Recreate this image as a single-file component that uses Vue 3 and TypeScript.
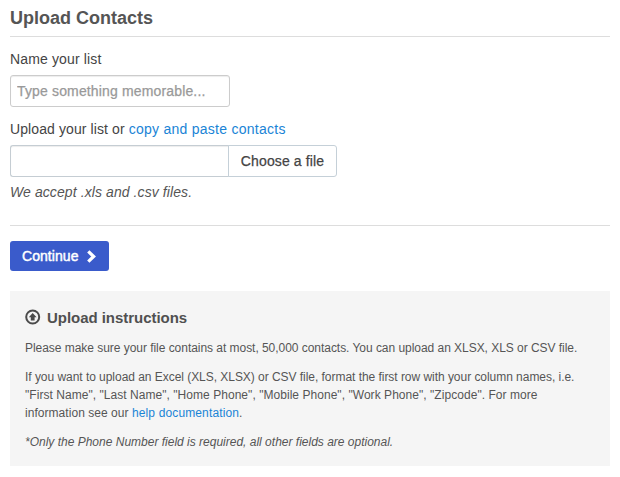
<script setup lang="ts">
import { ref } from 'vue'

const listName = ref<string>('')
const fileName = ref<string>('')
</script>

<template>
  <main class="page">
    <h1 class="title">Upload Contacts</h1>
    <form class="form" @submit.prevent>
      <label class="label name-label" for="list-name">Name your list</label>
      <input id="list-name" v-model="listName" class="field" type="text" placeholder="Type something memorable..." />
      <div class="label upload-label">Upload your list or <a class="link paste-link">copy and paste contacts</a></div>
      <div class="file-group">
        <input v-model="fileName" class="field file-field" type="text" readonly />
        <button class="choose" type="button">Choose a file</button>
      </div>
      <p class="hint">We accept .xls and .csv files.</p>
      <div class="actions">
        <button class="continue" type="submit">
          <span>Continue</span>
          <svg class="chevron" width="11" height="13" viewBox="0 0 11 13">
            <path d="M2.3 1.4 L7.6 6.5 L2.3 11.6" fill="none" stroke="#fff" stroke-width="3.3" />
          </svg>
        </button>
      </div>
    </form>
    <section class="panel">
      <h2 class="panel-title">
        <svg class="upload-icon" width="16" height="16" viewBox="0 0 16 16">
          <circle cx="7.7" cy="8" r="6.5" fill="none" stroke="#4b4b4b" stroke-width="2" />
          <path d="M7.7 3.9 L11.6 8.2 H9.6 V11.5 H5.8 V8.2 H3.8 Z" fill="#4b4b4b" />
        </svg>
        <span>Upload instructions</span>
      </h2>
      <p class="text snug">Please make sure your file contains at most, 50,000 contacts. You can upload an XLSX, XLS or CSV file.</p>
      <p class="text">
        <span class="snug">If you want to upload an Excel (XLS, XLSX) or CSV file, format the first row with your column names, i.e.</span><br />
        <span class="loose">"First Name", "Last Name", "Home Phone", "Mobile Phone", "Work Phone", "Zipcode". For more</span><br />
        <span class="loose">information see our <a class="link help-link">help documentation</a>.</span>
      </p>
      <p class="text note">*Only the Phone Number field is required, all other fields are optional.</p>
    </section>
  </main>
</template>

<style>
body {
  background: #fff;
}
</style>

<style scoped>
.page {
  box-sizing: border-box;
  height: 477px;
  padding: 0 10px;
  overflow: hidden;
  font-family: "Liberation Sans", Arial, sans-serif;
  font-size: 14px;
  line-height: 20px;
  color: #444;
}
.title {
  box-sizing: border-box;
  height: 37px;
  margin: 0;
  padding-top: 8px;
  border-bottom: 1px solid #ddd;
  font-size: 18px;
  line-height: 20px;
  color: #555;
  white-space: nowrap;
}
.form {
  display: flex;
  flex-direction: column;
  align-items: flex-start;
}
.label {
  white-space: nowrap;
}
.name-label {
  margin: 12px 0 6px;
  letter-spacing: 0.14px;
}
.upload-label {
  margin: 12px 0 6px;
  letter-spacing: 0.1px;
}
.link {
  color: #1a84d6;
  text-decoration: none;
}
.paste-link {
  letter-spacing: 0.26px;
}
.help-link {
  letter-spacing: 0.13px;
}
.field {
  box-sizing: border-box;
  width: 220px;
  height: 32px;
  padding: 0 6px;
  border: 1px solid #ccc;
  border-radius: 3px;
  background: #fff;
  box-shadow: inset 0 1px 1px rgba(0, 0, 0, 0.075);
  font: 14px "Liberation Sans", Arial, sans-serif;
  letter-spacing: 0.15px;
  color: #555;
  outline: none;
}
.field::placeholder {
  color: #999;
  opacity: 1;
  -webkit-text-stroke: 0.25px #999;
}
.file-group {
  display: flex;
}
.file-field {
  width: 219px;
  border-color: #c5cdd3;
  border-right: 0;
  border-radius: 3px 0 0 3px;
}
.choose {
  box-sizing: border-box;
  width: 109px;
  height: 32px;
  margin-left: -1px;
  padding: 0;
  border: 1px solid #c5d0d8;
  border-radius: 0 3px 3px 0;
  background: #fff;
  font: 14px "Liberation Sans", Arial, sans-serif;
  letter-spacing: 0.12px;
  color: #444;
  -webkit-text-stroke: 0.25px #444;
}
.hint {
  margin: 5px 0 0;
  font-style: italic;
  letter-spacing: 0.09px;
  color: #555;
}
.actions {
  box-sizing: border-box;
  width: 100%;
  margin-top: 23px;
  padding-top: 15px;
  border-top: 1px solid #ddd;
}
.continue {
  display: flex;
  align-items: center;
  gap: 7px;
  box-sizing: border-box;
  width: 99px;
  height: 30px;
  padding: 0 0 0 12px;
  border: 0;
  border-radius: 3px;
  background: #3a5bcb;
  font: 14px "Liberation Sans", Arial, sans-serif;
  letter-spacing: 0.06px;
  color: #fff;
  -webkit-text-stroke: 0.45px #fff;
}
.chevron {
  margin-top: 1px;
}
.panel {
  box-sizing: border-box;
  height: 175px;
  margin-top: 20px;
  padding: 17px 15px 0;
  background: #f5f5f5;
}
.panel-title {
  display: flex;
  align-items: center;
  gap: 6px;
  height: 20px;
  margin: 0 0 11px;
  font-size: 15px;
  letter-spacing: -0.04px;
  color: #505050;
}
.upload-icon {
  margin-top: -3px;
}
.text {
  margin: 0 0 11px;
  font-size: 12px;
  line-height: 18px;
  color: #555;
  white-space: nowrap;
}
.snug {
  letter-spacing: -0.04px;
}
.loose {
  letter-spacing: 0.045px;
}
.note {
  font-style: italic;
}
</style>
